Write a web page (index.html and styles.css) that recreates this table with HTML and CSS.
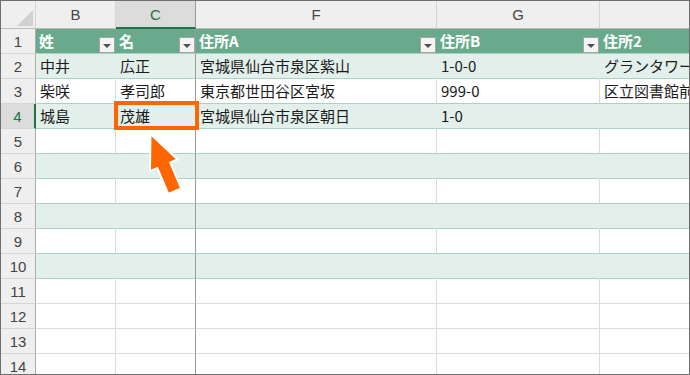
FILE: index.html
```html
<!DOCTYPE html>
<html lang="ja">

<head>
    <meta charset="UTF-8">
    <meta name="viewport" content="width=device-width, initial-scale=1.0">
    <title>住所録</title>
    <link rel="stylesheet" href="styles.css">
</head>

<body>

    <div class="sheet">

        <div class="row cols">
            <div class="corner"><span class="tri"></span></div>
            <div class="col">B</div>
            <div class="col sel frz">C</div>
            <div class="col">F</div>
            <div class="col">G</div>
            <div class="col"></div>
        </div>

        <div class="row">
            <div class="rn">1</div>
            <div class="d hd">姓<span class="fb"></span></div>
            <div class="d hd frz">名<span class="fb"></span></div>
            <div class="d hd">住所A<span class="fb"></span></div>
            <div class="d hd">住所B<span class="fb"></span></div>
            <div class="d hd">住所2</div>
        </div>

        <div class="row tbl band">
            <div class="rn">2</div>
            <div class="d">中井</div>
            <div class="d frz">広正</div>
            <div class="d">宮城県仙台市泉区紫山</div>
            <div class="d">1-0-0</div>
            <div class="d">グランタワー</div>
        </div>

        <div class="row tbl">
            <div class="rn">3</div>
            <div class="d">柴咲</div>
            <div class="d frz">孝司郎</div>
            <div class="d">東京都世田谷区宮坂</div>
            <div class="d">999-0</div>
            <div class="d">区立図書館前</div>
        </div>

        <div class="row tbl band">
            <div class="rn on">4</div>
            <div class="d">城島</div>
            <div class="d frz">茂雄</div>
            <div class="d">宮城県仙台市泉区朝日</div>
            <div class="d">1-0</div>
            <div class="d"></div>
        </div>

        <div class="row tbl">
            <div class="rn">5</div>
            <div class="d"></div><div class="d frz"></div><div class="d"></div><div class="d"></div><div class="d"></div>
        </div>
        <div class="row tbl band">
            <div class="rn">6</div>
            <div class="d"></div><div class="d frz"></div><div class="d"></div><div class="d"></div><div class="d"></div>
        </div>
        <div class="row tbl">
            <div class="rn">7</div>
            <div class="d"></div><div class="d frz"></div><div class="d"></div><div class="d"></div><div class="d"></div>
        </div>
        <div class="row tbl band">
            <div class="rn">8</div>
            <div class="d"></div><div class="d frz"></div><div class="d"></div><div class="d"></div><div class="d"></div>
        </div>
        <div class="row tbl">
            <div class="rn">9</div>
            <div class="d"></div><div class="d frz"></div><div class="d"></div><div class="d"></div><div class="d"></div>
        </div>
        <div class="row tbl band">
            <div class="rn">10</div>
            <div class="d"></div><div class="d frz"></div><div class="d"></div><div class="d"></div><div class="d"></div>
        </div>
        <div class="row">
            <div class="rn">11</div>
            <div class="d"></div><div class="d frz"></div><div class="d"></div><div class="d"></div><div class="d"></div>
        </div>
        <div class="row">
            <div class="rn">12</div>
            <div class="d"></div><div class="d frz"></div><div class="d"></div><div class="d"></div><div class="d"></div>
        </div>
        <div class="row">
            <div class="rn">13</div>
            <div class="d"></div><div class="d frz"></div><div class="d"></div><div class="d"></div><div class="d"></div>
        </div>
        <div class="row">
            <div class="rn">14</div>
            <div class="d"></div><div class="d frz"></div><div class="d"></div><div class="d"></div><div class="d"></div>
        </div>

        <!-- 注目セルの枠と矢印 -->
        <div class="mark"></div>
        <svg class="arrow" width="690" height="375" viewBox="0 0 690 375">
            <polygon transform="translate(150.5 134) rotate(-23)"
                points="0,0 15,34 7,34 7,62 -7,62 -7,34 -15,34"
                fill="#ff6600" stroke="#fff" stroke-width="2" stroke-linejoin="miter" />
        </svg>
    </div>

</body>

</html>
```

FILE: styles.css
```css
body {
    margin: 0;
    background-color: #fff;
}

.sheet {
    position: relative;
    width: 690px;
    height: 375px;
    box-sizing: border-box;
    border: 1px solid #6f6f6f;
    overflow: hidden;
    background-color: #fff;
    font-family: "Noto Sans CJK JP", sans-serif;
    font-size: 15px;
    color: #1a1a1a;
}

.row {
    display: grid;
    grid-template-columns: 35px 80px 80px 241px 163px 120px;
    height: 25px;
}

.row > div {
    box-sizing: border-box;
    border-right: 1px solid #dadada;
    border-bottom: 1px solid #dadada;
    overflow: hidden;
    white-space: nowrap;
}

/* 列見出し */
.row.cols {
    height: 28px;
}

.cols > div {
    background-color: #efefef;
    border-right-color: #d4d4d4;
    border-bottom-color: #bcbcbc;
    text-align: center;
    line-height: 27px;
    font-family: "Liberation Sans", sans-serif;
    font-size: 15px;
    color: #444;
}

.cols .sel {
    background-color: #dcdcdc;
    color: #217346;
    border-bottom: 2px solid #217346;
}

.corner {
    display: flex;
    justify-content: flex-end;
    align-items: flex-end;
    padding: 0 2px 2px 0;
}

.tri {
    width: 16px;
    height: 16px;
    background-color: #d0d0d0;
    clip-path: polygon(100% 0, 100% 100%, 0 100%);
}

/* 行番号 */
.row > .rn {
    background-color: #efefef;
    border-right-color: #ababab;
    border-bottom-color: #d6d6d6;
    text-align: center;
    line-height: 25px;
    font-family: "Liberation Sans", sans-serif;
    color: #444;
}

.row > .rn.on {
    background-color: #dcdcdc;
    color: #217346;
    border-right: 2px solid #217346;
}

/* セル */
.d {
    padding-left: 4px;
    line-height: 24px;
}

.tbl > .d {
    border-bottom-color: #a8d3c0;
}

.band > .d {
    background-color: #e2efea;
    border-right-color: #e2efea;
}

.row > .hd {
    display: flex;
    justify-content: space-between;
    padding-left: 3px;
    background-color: #69aa8d;
    border-right-color: #69aa8d;
    border-bottom-color: #a8d3c0;
    color: #fff;
    font-weight: bold;
}

.row > .frz {
    border-right-color: #9a9a9a;
}

/* フィルターボタン */
.fb {
    align-self: flex-end;
    width: 16px;
    height: 16px;
    box-sizing: border-box;
    border: 1px solid #a4a4a4;
    background-color: #f4f4f4;
}

.fb::after {
    content: "";
    display: block;
    width: 0;
    margin: 6px auto 0;
    border-left: 4px solid transparent;
    border-right: 4px solid transparent;
    border-top: 4px solid #505050;
}

.mark {
    position: absolute;
    left: 113px;
    top: 100px;
    width: 85px;
    height: 29px;
    box-sizing: border-box;
    border: 4px solid #ff6600;
}

.arrow {
    position: absolute;
    left: -1px;
    top: -1px;
    pointer-events: none;
}
```
